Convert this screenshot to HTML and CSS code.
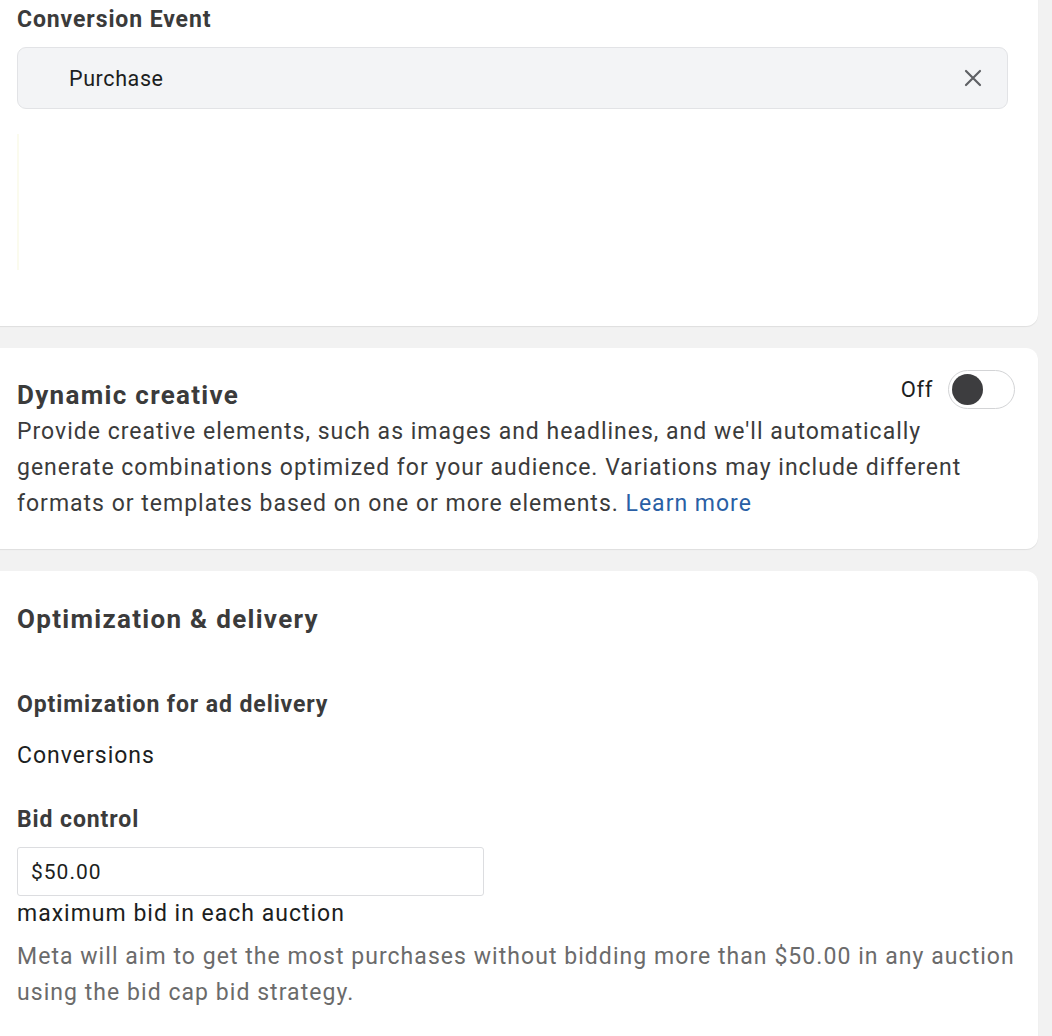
FILE: index.html
```html
<!DOCTYPE html>
<html>
<head>
<meta charset="utf-8">
<link rel="stylesheet" href="styles.css">
</head>
<body>
<div class="page">
  <section class="card card-first">
    <h3 class="label">Conversion Event</h3>
    <div class="select">
      <span class="select-value">Purchase</span>
      <svg class="clear" width="18" height="18" viewBox="0 0 18 18"><path d="M2 2 L16 16 M16 2 L2 16" stroke="#5f6165" stroke-width="2.2" stroke-linecap="round"/></svg>
    </div>
    <div class="faint-line"></div>
  </section>

  <section class="card card-dynamic">
    <div class="dyn-head">
      <h2 class="title">Dynamic creative</h2>
      <div class="toggle-wrap">
        <span class="toggle-label">Off</span>
        <span class="toggle"><span class="knob"></span></span>
      </div>
    </div>
    <p class="body-text">Provide creative elements, such as images and headlines, and we'll automatically generate combinations optimized for your audience. Variations may include different formats or templates based on one or more elements. <a class="link" href="#">Learn more</a></p>
  </section>

  <section class="card card-opt">
    <h2 class="title">Optimization &amp; delivery</h2>
    <h3 class="label sub">Optimization for ad delivery</h3>
    <div class="value">Conversions</div>
    <h3 class="label sub2">Bid control</h3>
    <div class="bid-input">$50.00</div>
    <div class="value small-gap">maximum bid in each auction</div>
    <p class="hint">Meta will aim to get the most purchases without bidding more than $50.00 in any auction using the bid cap bid strategy.</p>
  </section>
</div>
</body>
</html>
```

FILE: styles.css
```css
html, body {
  margin: 0;
  padding: 0;
  background: #f2f2f2;
  font-family: Roboto, "Liberation Sans", Arial, sans-serif;
  overflow: hidden;
}
.page {
  width: 1052px;
  height: 1036px;
  overflow: hidden;
  display: flex;
  flex-direction: column;
  gap: 22px;
}
.card {
  background: #fff;
  width: 1058px;
  margin-left: -20px;
  padding-left: 37px;
  padding-right: 30px;
  box-sizing: border-box;
  border-radius: 12px;
  box-shadow: 0 1px 1px rgba(0,0,0,0.08);
}
.card-first {
  margin-top: -20px;
  padding-top: 25px;
  height: 346px;
  flex-shrink: 0;
}
.label {
  margin: 0;
  font-size: 23px;
  letter-spacing: 0.9px;
  font-weight: 700;
  color: #3b3b3b;
  line-height: 30px;
}
.select {
  margin-top: 12px;
  width: 991px;
  height: 62px;
  box-sizing: border-box;
  border: 1px solid #e2e3e6;
  border-radius: 9px;
  background: #f3f4f6;
  display: flex;
  align-items: center;
  justify-content: space-between;
  padding-left: 51px;
  padding-right: 25px;
}
.select-value {
  font-size: 21.5px;
  letter-spacing: 0.6px;
  color: #1c1e21;
}
.faint-line {
  margin-top: 25px;
  width: 2px;
  height: 136px;
  background: #fbfbee;
}
.card-dynamic {
  height: 201px;
  flex-shrink: 0;
  padding-top: 20px;
}
.dyn-head {
  display: flex;
  justify-content: space-between;
  align-items: flex-start;
}
.title {
  margin: 0;
  font-size: 26px;
  letter-spacing: 1.3px;
  font-weight: 700;
  color: #3b3b3b;
  line-height: 30px;
  padding-top: 12px;
}
.toggle-wrap {
  display: flex;
  align-items: center;
  gap: 15px;
  margin-right: -7px;
  margin-top: 2px;
}
.toggle-label {
  font-size: 22px;
  letter-spacing: 0.6px;
  color: #1c1e21;
}
.toggle {
  width: 67px;
  height: 39px;
  box-sizing: border-box;
  border: 1px solid #d3d4d6;
  border-radius: 20px;
  background: #fff;
  display: flex;
  align-items: center;
  padding-left: 3px;
}
.knob {
  width: 31px;
  height: 31px;
  border-radius: 50%;
  background: #3d3d3f;
}
.body-text {
  margin: 4px 0 0;
  font-size: 23px;
  letter-spacing: 1px;
  line-height: 36px;
  color: #3b3b3b;
  width: 990px;
}
.link {
  color: #2a5fa5;
  text-decoration: none;
}
.card-opt {
  flex: 1;
  padding-top: 21px;
  border-bottom-left-radius: 0;
  border-bottom-right-radius: 0;
}
.sub {
  margin-top: 56px;
}
.value {
  font-size: 23px;
  letter-spacing: 1px;
  color: #1c1e21;
  line-height: 30px;
  margin-top: 21px;
}
.sub2 {
  margin-top: 34px;
}
.bid-input {
  margin-top: 12px;
  width: 467px;
  height: 49px;
  box-sizing: border-box;
  border: 1px solid #dcdde0;
  border-radius: 3px;
  display: flex;
  align-items: center;
  padding-left: 13px;
  font-size: 21px;
  letter-spacing: 1px;
  color: #1c1e21;
}
.small-gap {
  margin-top: 3px;
}
.hint {
  margin: 10px 0 0;
  font-size: 23px;
  letter-spacing: 1.05px;
  line-height: 36px;
  color: #6b6b6b;
  width: 1015px;
}
```
